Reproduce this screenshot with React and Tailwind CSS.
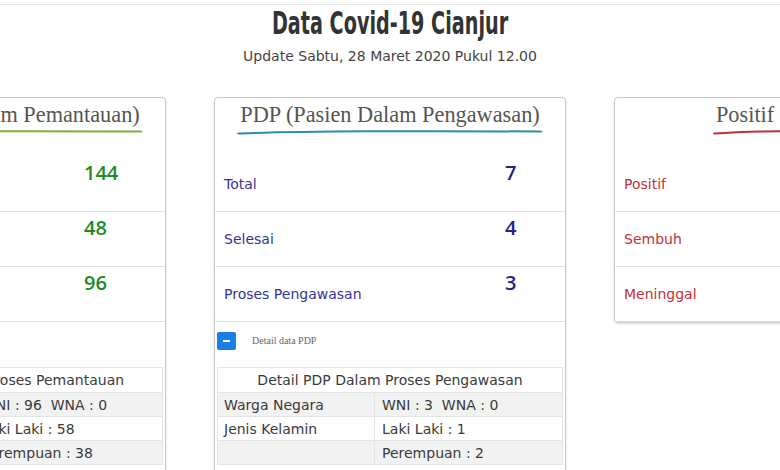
import React from 'react';

const cards = [
  {
    title: 'ODP (Orang Dalam Pemantauan)',
    line: '#7fae3a',
    label: 'text-[#2b8a2b]',
    value: 'text-[#1e8c1e]',
    col: 'w-[269px]',
    rows: [['Total', '144'], ['Selesai', '48'], ['Proses Pemantauan', '96']],
    detail: {
      btn: 'Detail data ODP',
      head: 'Detail ODP Dalam Proses Pemantauan',
      rows: [['Warga Negara', 'WNI : 96  WNA : 0'], ['Jenis Kelamin', 'Laki Laki : 58'], ['', 'Perempuan : 38']],
    },
  },
  {
    title: 'PDP (Pasien Dalam Pengawasan)',
    line: '#2c8ea3',
    label: 'text-[#34349a]',
    value: 'text-[#22228c]',
    col: 'w-[290px]',
    rows: [['Total', '7'], ['Selesai', '4'], ['Proses Pengawasan', '3']],
    detail: {
      btn: 'Detail data PDP',
      head: 'Detail PDP Dalam Proses Pengawasan',
      rows: [['Warga Negara', 'WNI : 3  WNA : 0'], ['Jenis Kelamin', 'Laki Laki : 1'], ['', 'Perempuan : 2']],
    },
  },
  {
    title: 'Positif Covid-19',
    line: '#c0323a',
    label: 'text-[#c3303a]',
    value: 'text-[#b8262e]',
    col: 'w-[290px]',
    rows: [['Positif', '0'], ['Sembuh', '0'], ['Meninggal', '0']],
  },
];

function Underline({ color }) {
  return (
    <svg className="block w-full h-[7px]" viewBox="0 0 100 7" preserveAspectRatio="none">
      <path d="M1 5.5 C 20 3.2, 60 2.6, 99 3.6" stroke={color} strokeWidth="2" fill="none" strokeLinecap="round" />
    </svg>
  );
}

function Card({ c }) {
  return (
    <div className="w-[352px] shrink-0 self-start bg-white border border-[#c9c9c9] rounded-[4px] shadow-[0_1px_3px_rgba(0,0,0,0.12)]">
      <div className="flex justify-center pt-[4px] h-[59px]">
        <div className="inline-block">
          <div className="font-['Liberation_Serif',serif] text-[22.3px] leading-[26px] text-[#555] px-[3px]">{c.title}</div>
          <Underline color={c.line} />
        </div>
      </div>
      {c.rows.map(([l, v], i) => (
        <div key={i} className="flex h-[55px] border-b border-[#e2e2e2]">
          <div className={`${c.col} pl-[9px] self-center text-[14px] ${c.label}`}>{l}</div>
          <div className={`pt-[4px] text-[20px] leading-[24px] font-semibold font-['Open_Sans',sans-serif] ${c.value}`}>{v}</div>
        </div>
      ))}
      {c.detail && (
        <div className="pt-[9px] pb-[10px]">
          <div className="flex items-center gap-[16px] pl-[2px] h-[19px]">
            <div className="w-[19px] h-[18px] bg-[#1a7ee6] rounded-[2px] flex items-center justify-center">
              <div className="w-[7px] h-[2px] bg-white" />
            </div>
            <span className="font-['Liberation_Serif',serif] text-[10px] text-[#666]">{c.detail.btn}</span>
          </div>
          <div className="mx-[2px] mt-[17px] border border-[#e4e4e4] text-[14px] text-[#3a3a3a]">
            <div className="h-[24px] leading-[24px] text-center">{c.detail.head}</div>
            {c.detail.rows.map(([a, b], i) => (
              <div key={i} className={`flex h-[24px] leading-[24px] border-t border-[#e4e4e4] ${i % 2 === 0 ? 'bg-[#f2f2f2]' : 'bg-white'}`}>
                <div className="w-[157px] pl-[6px] border-r border-[#e4e4e4]">{a}</div>
                <div className="pl-[7px] whitespace-pre">{b}</div>
              </div>
            ))}
          </div>
        </div>
      )}
    </div>
  );
}

export default function App() {
  return (
    <div className="w-[780px] h-[470px] overflow-hidden bg-white font-['DejaVu_Sans',sans-serif]">
      <div className="h-[5px] border-b border-[#e6e6e6]" />
      <h1 className="text-center text-[32px] leading-[34px] mt-[1px] text-[#333] font-['DejaVu_Sans',sans-serif] font-semibold scale-x-[0.6]">
        Data Covid-19 Cianjur
      </h1>
      <p className="text-center text-[14px] leading-[18px] mt-[7px] text-[#444]">Update Sabtu, 28 Maret 2020 Pukul 12.00</p>
      <div className="flex justify-center gap-[48px] mt-[32px]">
        {cards.map((c, i) => (
          <Card key={i} c={c} />
        ))}
      </div>
    </div>
  );
}
